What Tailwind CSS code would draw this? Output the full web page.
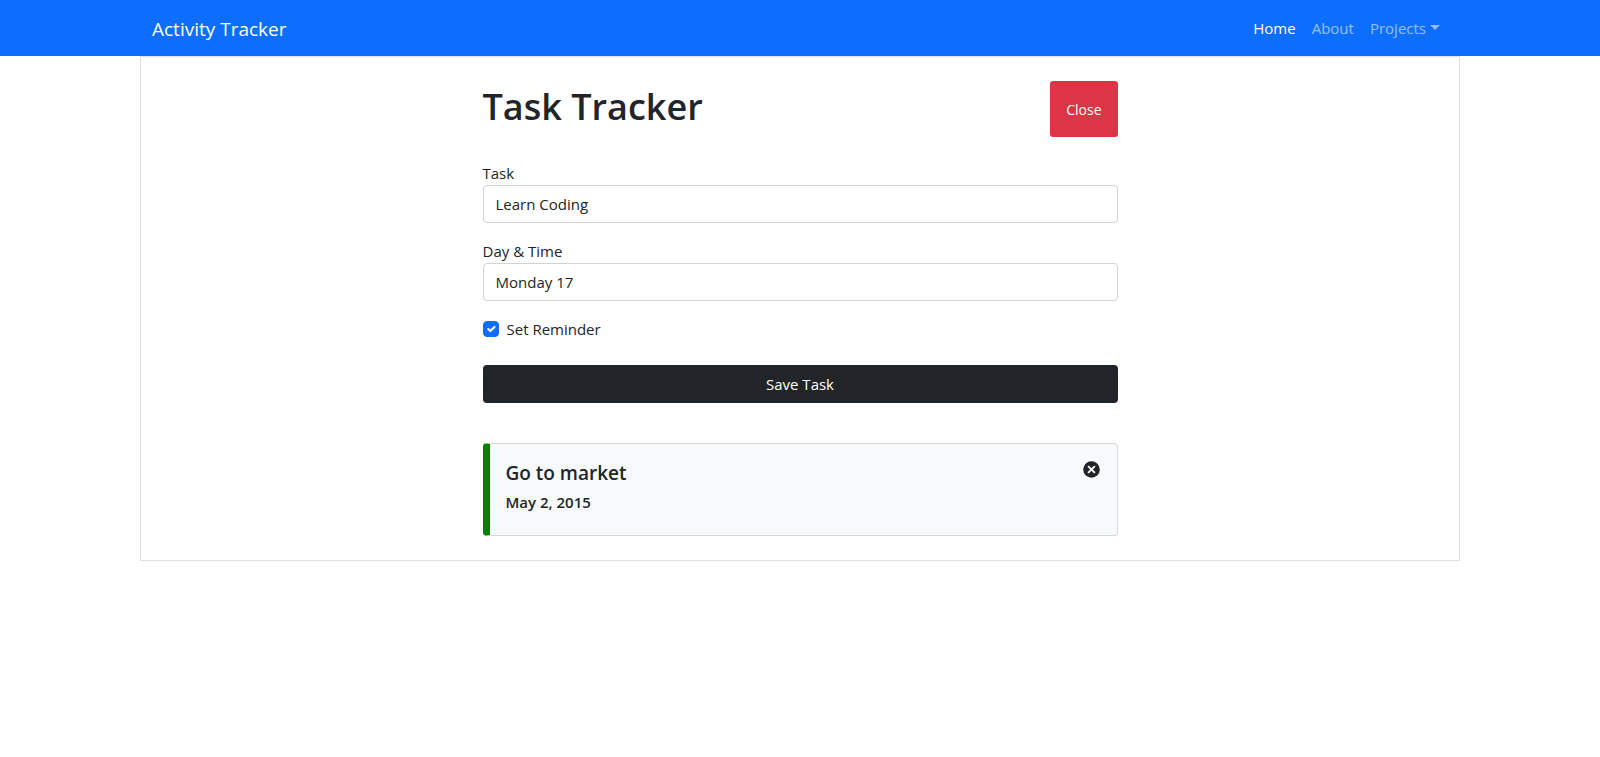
<!DOCTYPE html>
<html lang="en">
<head>
<meta charset="utf-8">
<meta name="viewport" content="width=device-width, initial-scale=1">
<title>Activity Tracker</title>
<script src="https://cdn.jsdelivr.net/npm/@tailwindcss/browser@4"></script>
</head>
<body class="bg-white font-['Open_Sans',sans-serif] text-[15px] leading-6 text-[#212529]">
<nav class="bg-[#0d6efd]">
  <div class="mx-auto flex h-14 max-w-[1320px] items-center justify-between px-3">
    <a href="#" class="pt-px text-[19px] text-white">Activity Tracker</a>
    <ul class="flex items-center">
      <li><a href="#" class="block px-2 py-2 text-white">Home</a></li>
      <li><a href="#" class="block px-2 py-2 text-white/55">About</a></li>
      <li><a href="#" class="flex items-center gap-1 px-2 py-2 text-white/55">Projects
        <svg class="mb-0.5 h-[5px] w-[10px]" viewBox="0 0 10 5" fill="currentColor" aria-hidden="true"><path d="M0 0h10L5 5z"/></svg></a></li>
    </ul>
  </div>
</nav>
<main class="mx-auto max-w-[1320px] border border-[#dee2e6] py-6">
  <div class="mx-auto w-1/2 px-3">
    <header class="mb-6 flex justify-between">
      <h1 class="mb-1.5 pt-0.5 text-4xl leading-12 font-semibold">Task Tracker</h1>
      <button type="button" class="rounded-[3px] bg-[#dc3545] px-4 pt-0.5 text-sm text-white">Close</button>
    </header>
    <form>
      <div class="mb-4">
        <label for="task" class="block">Task</label>
        <input id="task" type="text" value="Learn Coding" class="block h-[38px] w-full rounded border border-[#ced4da] px-3">
      </div>
      <div class="mb-4">
        <label for="day" class="block">Day &amp; Time</label>
        <input id="day" type="text" value="Monday 17" class="block h-[38px] w-full rounded border border-[#ced4da] px-3">
      </div>
      <div class="mb-6 flex items-center gap-2">
        <span class="relative block size-4">
          <input id="reminder" type="checkbox" checked class="peer block size-4 appearance-none rounded border border-black/25 checked:border-[#0d6efd] checked:bg-[#0d6efd]">
          <svg class="pointer-events-none absolute inset-px hidden size-[14px] peer-checked:block" viewBox="0 0 20 20" fill="none" stroke="#fff" stroke-width="3" stroke-linecap="round" stroke-linejoin="round" aria-hidden="true"><path d="M6 10l3 3l6-6"/></svg>
        </span>
        <label for="reminder">Set Reminder</label>
      </div>
      <button type="button" class="block h-[38px] w-full rounded bg-[#212529] text-white">Save Task</button>
    </form>
    <article class="mt-10 flex items-start justify-between rounded border border-l-[7px] border-[#d7d8da] border-l-[#008000] bg-[#f8f9fa] p-4">
      <div>
        <h2 class="mb-2 pt-px text-[19px] leading-6 font-semibold">Go to market</h2>
        <h3 class="mb-[7px] text-[15px] leading-[19px] font-semibold">May 2, 2015</h3>
      </div>
      <button type="button" aria-label="Delete task" class="px-px py-px">
        <svg class="size-[17px]" viewBox="0 0 17 17" aria-hidden="true"><circle cx="8.500" cy="8.500" r="8.300" fill="currentColor"/><path d="M5.100 5.100l6.800 6.800M11.900 5.100l-6.800 6.800" stroke="#f8f9fa" stroke-width="2"/></svg>
      </button>
    </article>
  </div>
</main>
</body>
</html>
